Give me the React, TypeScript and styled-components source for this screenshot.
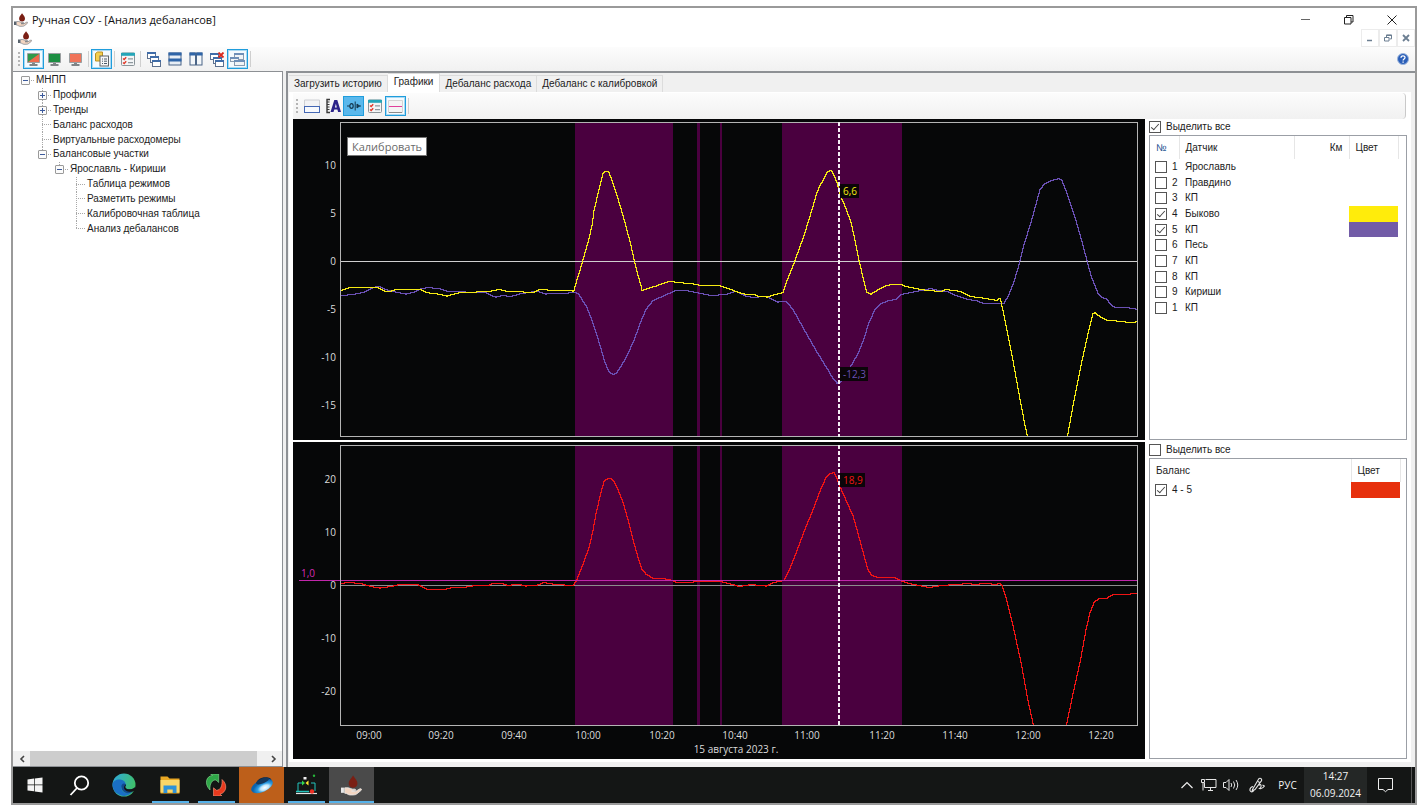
import React, { useLayoutEffect, useRef, useState } from "react";
import styled, { createGlobalStyle } from "styled-components";

/* ---------- theme values ---------- */

const FORM_FONT = `"Liberation Sans", Arial, sans-serif`;
const UI_FONT = `"Open Sans", "Noto Sans", sans-serif`;
const FACE = "#f0f0f0";
const EDGE = "#8d9094";
const ACCENT = "#1f9ddc";

const GlobalStyle = createGlobalStyle`
  *, *::before, *::after { box-sizing: border-box; }
  html, body { margin: 0; padding: 0; background: #fff; }
  body { font: 10px/14px ${FORM_FONT}; color: #1b1b22; }
  button, input { font: inherit; color: inherit; margin: 0; padding: 0; }
  button { border: 0; background: none; cursor: default; }
  svg { display: block; }
`;

/* ---------- window frame ---------- */

const Desktop = styled.div`
  height: 100vh;
  min-height: 480px;
  padding: 6px 6px 6px 11px;
  display: flex;
`;

const Frame = styled.div`
  flex: 1;
  min-width: 0;
  display: flex;
  flex-direction: column;
  border: 2px solid #9a9a9a;
  background: ${FACE};
`;

const TitleBar = styled.header`
  flex: none;
  height: 21px;
  display: flex;
  align-items: center;
  padding: 2px 2px 0 1px;
  background: #fff;
`;

const Title = styled.h1`
  margin: 0 0 0 4px;
  flex: 1;
  font: 400 11px/16px ${UI_FONT};
  color: #111;
`;

const CaptionButton = styled.button`
  width: 43px;
  height: 19px;
  display: flex;
  align-items: center;
  justify-content: center;
`;

const MdiBar = styled.div`
  flex: none;
  height: 18px;
  display: flex;
  align-items: center;
  background: #fff;
  padding-left: 5px;
`;

const MdiButtons = styled.div`
  margin-left: auto;
  display: flex;
  gap: 2px;
  height: 18px;
  padding: 1px;
  background: #ececec;
`;

const MdiButton = styled.button`
  width: 16px;
  display: flex;
  align-items: center;
  justify-content: center;
  background: #fff;
`;

/* ---------- tool strips ---------- */

const ToolStrip = styled.div`
  flex: none;
  height: 24px;
  display: flex;
  align-items: center;
  padding: 0 6px 0 5px;
  background: linear-gradient(#fcfcfc, #f1f1f1);
`;

const ChartStrip = styled(ToolStrip)`
  height: 26px;
  padding: 0 0 0 3px;
  margin-right: 5px;
  border-radius: 0 4px 4px 0;
  border-right: 1px solid #c9c9c9;
`;

const Grip = styled.span`
  flex: none;
  width: 2px;
  height: 14px;
  margin-right: 3px;
  background: repeating-linear-gradient(#b5b5b5 0 2px, transparent 2px 4px);
`;

const ToolButton = styled.button<{ $state?: "checked" | "pressed" }>`
  flex: none;
  width: 21px;
  height: 20px;
  display: flex;
  align-items: center;
  justify-content: center;
  border: 1px solid ${(p) => (p.$state ? ACCENT : "transparent")};
  box-shadow: ${(p) => (p.$state === "checked" ? "inset 0 0 0 1px #a9d9f3" : "none")};
  background: ${(p) => (p.$state === "pressed" ? "#5ab8ec" : p.$state ? "#f4fafe" : "none")};
`;

const Separator = styled.span`
  flex: none;
  width: 1px;
  height: 16px;
  margin: 0 2px;
  background: #cfcfcf;
`;

const HelpButton = styled.button`
  margin-left: auto;
`;

/* ---------- client area ---------- */

const Client = styled.main`
  flex: 1;
  min-height: 0;
  display: flex;
  gap: 3px;
`;

const TreePane = styled.nav`
  flex: none;
  width: 270px;
  display: flex;
  flex-direction: column;
  border: 1px solid ${EDGE};
  border-left: 0;
  background: #fff;
`;

const TreeList = styled.ul`
  list-style: none;
  margin: 0 0 auto;
  padding: 1px 0 0 4px;
  height: 164px;
  display: grid;
  grid-auto-rows: 1fr;
`;

const TreeRow = styled.li<{ $depth: number }>`
  display: flex;
  align-items: stretch;
  padding-left: ${(p) => p.$depth * 17}px;
`;

const Branch = styled.span<{ $line: "none" | "full" | "half" }>`
  flex: none;
  width: 17px;
  display: grid;
  place-items: center;
  background:
    ${(p) =>
      p.$line === "none"
        ? ""
        : `repeating-linear-gradient(#a8a8a8 0 1px, transparent 1px 2px) 8px 0 / 1px ${p.$line === "full" ? "100%" : "50%"} no-repeat,`}
    repeating-linear-gradient(90deg, #a8a8a8 0 1px, transparent 1px 2px) 8px 50% / 9px 1px no-repeat;
`;

const Expander = styled.button`
  width: 9px;
  height: 9px;
  border: 1px solid #9a9a9a;
  border-radius: 1px;
  background:
    linear-gradient(#3c5a9c, #3c5a9c) center / 5px 1px no-repeat,
    #fbfbfb;
  &[aria-expanded="false"] {
    background:
      linear-gradient(#3c5a9c, #3c5a9c) center / 5px 1px no-repeat,
      linear-gradient(#3c5a9c, #3c5a9c) center / 1px 5px no-repeat,
      #fbfbfb;
  }
`;

const TreeLabel = styled.a`
  align-self: center;
  padding-left: 2px;
  color: inherit;
  text-decoration: none;
  white-space: nowrap;
`;

const ScrollBar = styled.div`
  flex: none;
  height: 15px;
  display: flex;
  background: ${FACE};
`;

const ScrollArrow = styled.button`
  flex: none;
  width: 17px;
  display: grid;
  place-items: center;
`;

const ScrollThumb = styled.div`
  flex: 1;
  margin-right: 8px;
  background: #cdcdcd;
`;

const DocPane = styled.section`
  flex: 1;
  min-width: 0;
  display: flex;
  flex-direction: column;
  border-top: 2px solid ${EDGE};
  border-left: 2px solid ${EDGE};
  padding: 0 4px 5px 1px;
`;

const Tabs = styled.div`
  flex: none;
  height: 19px;
  display: flex;
  align-items: flex-end;
`;

const Tab = styled.button`
  height: 17px;
  padding: 0 5px;
  border: 1px solid #dcdcdc;
  border-width: 1px 1px 0 0;
  white-space: nowrap;
  &[aria-selected="true"] {
    height: 19px;
    padding: 0 6px 3px;
    background: #fff;
  }
`;

const TabPage = styled.div`
  flex: 1;
  min-height: 0;
  display: flex;
  flex-direction: column;
  padding: 1px 0 3px 4px;
  background: #fff;
`;

const Workspace = styled.div`
  flex: 1;
  min-height: 0;
  display: grid;
  grid-template-columns: minmax(0, 1fr) 258px;
  grid-template-rows: minmax(0, 321fr) minmax(0, 317fr);
  gap: 2px 4px;
  padding-right: 4px;
`;

/* ---------- charts ---------- */

const ChartBox = styled.div`
  position: relative;
  min-width: 0;
  min-height: 0;
  overflow: hidden;
  background: #060708;
`;

const ChartSvg = styled.svg`
  position: absolute;
  inset: 0;
  width: 100%;
  height: 100%;
  font: 10px ${UI_FONT};
`;

const Tooltip = styled.div`
  position: absolute;
  left: 54px;
  top: 18px;
  padding: 0 4px;
  border: 1px solid #767676;
  background: #fff;
  font: 11px/17px ${UI_FONT};
  color: #6a6a6a;
`;

/* ---------- side lists ---------- */

const Side = styled.div`
  min-height: 0;
  display: flex;
  flex-direction: column;
`;

const SelectAll = styled.label`
  flex: none;
  height: 16px;
  display: flex;
  align-items: center;
  gap: 5px;
`;

const Check = styled.input.attrs({ type: "checkbox" })`
  appearance: none;
  flex: none;
  width: 12px;
  height: 12px;
  border: 1px solid #555;
  background: #fff;
  display: grid;
  place-items: center;
  &:checked::before {
    content: "";
    width: 8px;
    height: 4px;
    border: solid #444;
    border-width: 0 0 1px 1px;
    transform: translateY(-1px) rotate(-48deg);
  }
`;

const ListBox = styled.div`
  flex: 1;
  min-height: 0;
  overflow: hidden;
  border: 1px solid #9b9fa6;
  background: #fff;
`;

const ListTable = styled.table<{ $height: number }>`
  width: 100%;
  height: ${(p) => p.$height}px;
  table-layout: fixed;
  border-collapse: collapse;
  th, td { padding: 0; text-align: left; font-weight: 400; white-space: nowrap; }
  th { height: 23px; padding: 0 6px; border-right: 1px solid #e6e6e6; }
  th:last-child { border-right: 0; }
`;

const HeadNumber = styled.th`
  color: #1c4f8f;
`;

const HeadRight = styled.th`
  && { text-align: right; }
`;

const NameCell = styled.td`
  && { padding-left: 6px; }
`;

const Swatch = styled.td<{ $color?: string }>`
  background: ${(p) => p.$color ?? "transparent"};
`;

const RowLabel = styled.label`
  display: flex;
  align-items: center;
  gap: 5px;
  padding-left: 5px;
`;

/* ---------- taskbar ---------- */

const Taskbar = styled.footer`
  flex: none;
  height: 36px;
  display: flex;
  background: #141615;
  color: #f2f2f2;
  font: 10px/17px ${UI_FONT};
`;

const TaskButton = styled.button<{ $width: number; $bg?: string; $running?: boolean; $active?: boolean }>`
  flex: none;
  width: ${(p) => p.$width}px;
  display: grid;
  place-items: center;
  background:
    linear-gradient(#56b2ea, #56b2ea) bottom / ${(p) => (p.$active ? "100%" : p.$running ? "37px" : "0")} 2px no-repeat,
    ${(p) => p.$bg ?? "transparent"};
`;

const Tray = styled.div`
  margin-left: auto;
  display: flex;
  align-items: center;
`;

const TrayButton = styled.button<{ $width: number }>`
  width: ${(p) => p.$width}px;
  height: 36px;
  display: grid;
  place-items: center;
`;

const Clock = styled.time`
  width: 63px;
  height: 36px;
  padding-top: 1px;
  background: #242726;
  text-align: center;
`;

const ShowDesktop = styled.button`
  width: 4px;
  height: 36px;
  margin-left: 7px;
  border-left: 1px solid #555;
`;

/* ---------- icons ---------- */

const DropHand = ({ size = 14, cuff = "#56616b", drop = "#7a1f14" }: { size?: number; cuff?: string; drop?: string }) => (
  <svg width={size} height={size} viewBox="0 0 20 20">
    <path d="M11.5 0.5c1.6 2.7 4.2 4.7 4.2 7.4a4.2 4.2 0 0 1-8.4 0c0-2.700 2.600-4.700 4.200-7.400z" fill={drop} />
    <path d="M0 12h2.800v5H0z" fill={cuff} />
    <path
      d="M3.500 12.200h3.200c1.800 0 2.600 1.300 4.400 1.300h2c1.200 0 1.200 1.500 0 1.600l-3 .2 4 .2 3.600-2.200c1.400-.8 2.500.4 1.500 1.300l-4 3.300c-1 .8-2 1.100-3.400 1.100H8.500c-1.800 0-2.500-1.700-5-1.700z"
      fill="#f3d6c2"
      stroke={cuff}
      strokeWidth="0.8"
    />
  </svg>
);

const MonitorIcon = ({ a, b }: { a: string; b: string }) => (
  <svg width="15" height="15" viewBox="0 0 15 15">
    <rect x="1" y="1" width="13" height="10" rx="0.800" fill="#9a9ea0" />
    <path d="M2 2h11v8H2z" fill={b} />
    <path d="M2 2h11L2 10z" fill={a} />
    <path d="M6 11h3v1h2.500v2h-8v-2H6z" fill="#7f8486" />
  </svg>
);

const CopyListIcon = () => (
  <svg width="16" height="16" viewBox="0 0 16 16">
    <path d="M1.500 2.500l2-1.500h5v9h-7z" fill="#f4cf4e" stroke="#b98f22" />
    <rect x="6" y="5" width="8.500" height="10" fill="#f7f7f7" stroke="#5e6468" />
    <path d="M8 8h1M8 10.200h1M8 12.500h1M10 8h3M10 10.200h3M10 12.500h3" stroke="#4a5a6a" />
  </svg>
);

const ChecklistIcon = () => (
  <svg width="14" height="14" viewBox="0 0 14 14">
    <rect x="0.500" y="1" width="13" height="12.500" rx="1" fill="#f3f5f6" stroke="#8b9499" />
    <path d="M0 0.800h14v3H0z" fill="#25a5b8" />
    <path d="M2 6.500l1.200 1 2-2.200M2 10.500l1.200 1 2-2.200" stroke="#e23a2a" strokeWidth="1.400" fill="none" />
    <path d="M7 6.800h5M7 10.700h5" stroke="#8f999f" strokeWidth="1.200" />
  </svg>
);

const MiniWindow = ({ x, y, w = 8, h = 6, pale = false }: { x: number; y: number; w?: number; h?: number; pale?: boolean }) => (
  <g>
    <rect x={x + 0.5} y={y + 0.5} width={w} height={h} fill={pale ? "#f1f4f7" : "#fff"} stroke={pale ? "#8a9bb0" : "#5d7190"} />
    <rect x={x} y={y} width={w + 1} height="2" fill={pale ? "#6e8fb8" : "#3f6ca8"} />
  </g>
);

const CascadeIcon = () => (
  <svg width="16" height="15" viewBox="0 0 16 15">
    <MiniWindow x={1} y={0} />
    <MiniWindow x={4} y={4} />
    <MiniWindow x={6} y={8} />
  </svg>
);

const TileRowsIcon = () => (
  <svg width="14" height="14" viewBox="0 0 14 14">
    <rect x="1" y="1" width="12" height="12" fill="#e8eef5" stroke="#4b6587" />
    <path d="M0.500 0.500h13v3H0.500zM0.500 6.500h13v3H0.500z" fill="#2f65a8" />
  </svg>
);

const TileColsIcon = () => (
  <svg width="14" height="14" viewBox="0 0 14 14">
    <rect x="1" y="1" width="5.500" height="12" fill="#f4f7fa" stroke="#4b6587" />
    <rect x="7.500" y="1" width="5.500" height="12" fill="#f4f7fa" stroke="#4b6587" />
    <path d="M0.500 0.500h6v3h-6zM7.500 0.500h6v3h-6z" fill="#2f65a8" />
  </svg>
);

const CloseAllIcon = () => (
  <svg width="16" height="15" viewBox="0 0 16 15">
    <MiniWindow x={1} y={1} />
    <MiniWindow x={4} y={5} />
    <MiniWindow x={6} y={8} />
    <path d="M9.500 0.500l5 5M14.500 0.500l-5 5" stroke="#d9281c" strokeWidth="1.800" />
  </svg>
);

const WindowsPaleIcon = () => (
  <svg width="17" height="15" viewBox="0 0 17 15">
    <MiniWindow x={5} y={1} w={9} h={6} pale />
    <MiniWindow x={1} y={5} w={8} h={4} pale />
    <MiniWindow x={5} y={8} w={10} h={5} pale />
  </svg>
);

const HelpIcon = () => (
  <svg width="12" height="12" viewBox="0 0 12 12">
    <circle cx="6" cy="6" r="5.500" fill="#2b5fb8" stroke="#9ab4dc" />
    <path d="M4 4.700c0-2.500 4-2.400 4-.2 0 1.500-1.900 1.400-1.900 3M6.100 8.500v1.200" stroke="#fff" strokeWidth="1.300" fill="none" />
  </svg>
);

const SplitIcon = () => (
  <svg width="16" height="16" viewBox="0 0 16 16">
    <path d="M0.500 8V2h15v6" fill="#f3f3f5" stroke="#cfd0d4" />
    <rect x="0.500" y="8.500" width="15" height="6" fill="#f7f9fd" stroke="#4467b4" />
  </svg>
);

const AxisIcon = () => (
  <svg width="16" height="16" viewBox="0 0 16 16">
    <path d="M5 1.500H2v13h3" fill="none" stroke="#3a3a3a" strokeWidth="1.400" />
    <path d="M2 4h2.500M2 6.500h2.500M2 9h2.500M2 11.500h2.500" stroke="#3a3a3a" strokeWidth="1.200" />
    <path d="M5.500 14L9.300 2h3L16 14h-2.900l-.7-2.500H9.300L8.500 14zM9.900 9.400h1.900L10.900 5.800z" fill="#2b2389" fillRule="evenodd" />
  </svg>
);

const CalibrateIcon = () => (
  <svg width="14" height="12" viewBox="0 0 14 12">
    <ellipse cx="4.500" cy="6" rx="1.700" ry="2.300" fill="none" stroke="#15384f" strokeWidth="1.200" />
    <path d="M0 6h2.500M8.200 1.500v9M10 4l2.500 2-2.500 2zM12 6h2" stroke="#15384f" fill="#15384f" />
  </svg>
);

const ThresholdIcon = () => (
  <svg width="15" height="15" viewBox="0 0 15 15">
    <path d="M0.500 1.500h14v12H0.500z" fill="#f4f4f4" stroke="#d4d4d4" />
    <path d="M1 13.500h13" stroke="#8a8a8a" />
    <path d="M1 7.500h13" stroke="#e0409c" />
  </svg>
);

const StartIcon = () => (
  <svg width="16" height="16" viewBox="0 0 16 16" fill="#f4f4f4">
    <path d="M0.500 2.500L7 1.600v6H.5zM7.700 1.500L15.500.4v7.200H7.700zM.5 8.300H7v6L.5 13.400zM7.700 8.300h7.800v7.300l-7.800-1.100z" />
  </svg>
);

const SearchIcon = () => (
  <svg width="21" height="21" viewBox="0 0 21 21" fill="none" stroke="#fff" strokeWidth="1.800">
    <circle cx="12.500" cy="8" r="6.700" />
    <path d="M8 13L1.500 20" />
  </svg>
);

const EdgeIcon = () => (
  <svg width="24" height="24" viewBox="0 0 24 24">
    <defs>
      <linearGradient id="edgeTop" x1="0" y1="0" x2="1" y2="0.400">
        <stop offset="0" stopColor="#2fa8e0" />
        <stop offset="1" stopColor="#3fc06a" />
      </linearGradient>
    </defs>
    <circle cx="12" cy="12" r="11.500" fill="url(#edgeTop)" />
    <path d="M.5 12C.8 7.500 5 6 8.500 6.500c4 .5 5.500 3.500 5 5.500-1.500-1-4 0-4 3 0 4 5 6.500 10.500 4.500A11.500 11.500 0 0 1 .5 12z" fill="#1a6fc4" />
    <path d="M9.500 15c-1-4 2.500-5.500 4.500-3.500 0 1.500-1.300 2-.5 3.200 1.500 2.300 7.500 2.300 9.700-.7-.6 2.500-2 4.300-3.700 5.500-5 1.800-9 0-10-4.500z" fill="#11488f" />
    <path d="M14 11.500c0 1.500-1.300 2-.5 3.200 1.500 2.300 7 2.300 9.900-.9l.6 4-3.500.7c-3.500 1-8-.5-8.500-3.500-.2-1.500.7-3 2-3.500z" fill="#141615" />
  </svg>
);

const FolderIcon = () => (
  <svg width="20" height="18" viewBox="0 0 20 18">
    <path d="M0.500 0.500h7l2 2h10v15H.5z" fill="#e9a824" />
    <path d="M.5 4h19v12.500H.5z" fill="#fcd667" />
    <path d="M3.500 9.500h13V17h-3.800v-3.500H7.300V17H3.500z" fill="#2f92d8" />
  </svg>
);

const SyncIcon = () => (
  <svg width="22" height="22" viewBox="0 0 22 22">
    <path d="M5 16C-1 10 1 2 7.500 1.500L5.500 0h8.200v8.500L11 6C7 5.500 4.500 10 5 16z" fill="#2fa848" stroke="#8ad694" strokeWidth="0.600" />
    <path d="M17 5.500c6 5 4.500 13-2 14.700l2 1.800H8.500v-8.200l3 2.500c4.500-.3 6-5 5.500-10.800z" fill="#e8391d" stroke="#f79a80" strokeWidth="0.600" />
  </svg>
);

const SaucerIcon = () => (
  <svg width="24" height="18" viewBox="0 0 24 18">
    <defs>
      <radialGradient id="saucer" cx="0.580" cy="0.720" r="0.550">
        <stop offset="0" stopColor="#fff" />
        <stop offset="0.350" stopColor="#bfe6fb" />
        <stop offset="0.600" stopColor="#2f9fe4" />
        <stop offset="1" stopColor="#0b63ae" />
      </radialGradient>
    </defs>
    <path d="M6 8C7 3 12 .5 18 1.500c3 .5 4 2 3 4z" fill="#122a44" />
    <ellipse cx="12" cy="10" rx="11.500" ry="6" transform="rotate(-24 12 10)" fill="url(#saucer)" />
    <ellipse cx="12.500" cy="5" rx="7" ry="2.400" transform="rotate(-22 12.500 5)" fill="#16385c" />
  </svg>
);

const StationIcon = () => (
  <svg width="24" height="22" viewBox="0 0 24 22" fill="none">
    <path d="M3 17V9h4M16 9h4v8" stroke="#23c4bd" />
    <path d="M1 19.500h21" stroke="#e6e6e6" strokeWidth="1.200" />
    <path d="M1 17.500h13" stroke="#23c4bd" strokeWidth="1.500" />
    <path d="M7 6.500v5l3-2.500z" fill="#36d94a" />
    <path d="M13.500 6.500v5l-3-2.500z" fill="#ffe82e" />
    <path d="M8.500 3h3v2.500h-3z" fill="#f1f1f1" />
    <circle cx="19" cy="1.800" r="1.200" fill="#26b53a" />
    <circle cx="17" cy="17.500" r="2.200" fill="#ef3125" />
  </svg>
);

/* ---------- chart ---------- */

type Point = [number, number];
interface Series { color: string; points: Point[] }
interface Mark { y: number; text: string }
interface ChartProps {
  label: string;
  /* plot area in grid units; series, bands and ticks use the same grid */
  gridHeight: number;
  bottom: number;
  zero: number;
  zeroColor: string;
  ticks: Mark[];
  series: Series[];
  readouts: (Mark & { color: string; width: number })[];
  threshold?: Mark;
  showTime?: boolean;
  children?: React.ReactNode;
}

const GRID_WIDTH = 798;
const CURSOR = 499;
const BANDS: Point[] = [[235, 98], [357, 3], [380, 2], [442, 120]];
const TIMES: [number, string][] = [
  [29, "09:00"], [101, "09:20"], [174, "09:40"], [248, "10:00"], [322, "10:20"], [395, "10:40"],
  [467, "11:00"], [542, "11:20"], [615, "11:40"], [688, "12:00"], [761, "12:20"],
];

const LEFT = 47;
const TOP = 3;
const RIGHT = 7;

/* one horizontal and one vertical run per screen column, as a non-smoothed plotter draws */
function stepPath(points: Point[], width: number, toX: (x: number) => number, toY: (y: number) => number) {
  let d = "";
  let k = 0;
  for (let px = 0; px <= width; px += 1) {
    const gx = (px * GRID_WIDTH) / width;
    while (k < points.length - 2 && points[k + 1][0] < gx) k += 1;
    const [x0, y0] = points[k];
    const [x1, y1] = points[k + 1];
    const t = Math.min(1, (gx - x0) / (x1 - x0));
    const y = Math.round(toY(y0 + (y1 - y0) * t)) + 0.5;
    const x = toX(px) + 0.5;
    d += d ? `H${x}V${y}` : `M${x} ${y}`;
  }
  return d;
}

function Chart(props: ChartProps) {
  const box = useRef<HTMLDivElement>(null);
  const [size, setSize] = useState({ w: 852, h: 320 });

  useLayoutEffect(() => {
    const el = box.current;
    if (!el) return;
    const measure = () => setSize({ w: el.clientWidth, h: el.clientHeight });
    measure();
    const observer = new ResizeObserver(measure);
    observer.observe(el);
    return () => observer.disconnect();
  }, []);

  const plotW = Math.max(size.w - LEFT - RIGHT, 1);
  const plotH = Math.max(size.h - TOP - props.bottom, 1);
  const sx = (x: number) => Math.round(LEFT + (x * plotW) / GRID_WIDTH);
  const sy = (y: number) => TOP + (y * plotH) / props.gridHeight;
  const ly = (y: number) => Math.round(sy(y)) + 0.5;
  const clipId = `plot-${props.gridHeight}`;

  return (
    <ChartBox ref={box}>
      <ChartSvg role="img" aria-label={props.label}>
        <clipPath id={clipId}>
          <rect x={LEFT} y={TOP} width={plotW} height={plotH} />
        </clipPath>
        {BANDS.map(([x, w]) => (
          <rect key={x} x={sx(x)} y={TOP} width={sx(x + w) - sx(x)} height={plotH} fill="#4a003f" />
        ))}
        <path d={`M${LEFT} ${ly(props.zero)}H${LEFT + plotW}`} stroke={props.zeroColor} shapeRendering="crispEdges" />
        <g clipPath={`url(#${clipId})`} fill="none" shapeRendering="crispEdges">
          {props.series.map((s) => (
            <path key={s.color} stroke={s.color} d={stepPath(s.points, plotW, (px) => LEFT + px, sy)} />
          ))}
        </g>
        {props.threshold && (
          <g>
            <path d={`M6 ${ly(props.threshold.y)}H${LEFT + plotW}`} stroke="#c026aa" shapeRendering="crispEdges" />
            <text x="8" y={sy(props.threshold.y) - 3} fill="#d42bb5">{props.threshold.text}</text>
          </g>
        )}
        <rect x={LEFT + 0.5} y={TOP + 0.5} width={plotW - 1} height={Math.max(plotH - 1, 0)} fill="none" stroke="#b4b4b4" />
        <path d={`M${sx(CURSOR)} ${TOP}V${TOP + plotH}`} stroke="#f4eef4" strokeWidth="2" strokeDasharray="4 2" />
        {props.readouts.map((r) => (
          <g key={r.text}>
            <rect x={sx(CURSOR) + 1} y={sy(r.y) - 7} width={r.width} height="14" fill="#0b0509" />
            <text x={sx(CURSOR) + 4} y={sy(r.y) + 4} fill={r.color}>{r.text}</text>
          </g>
        ))}
        <g fill="#dcdcdc" textAnchor="end">
          {props.ticks.map((t) => (
            <text key={t.text} x={LEFT - 4} y={sy(t.y) + 4}>{t.text}</text>
          ))}
        </g>
        {props.showTime && (
          <g fill="#dcdcdc" textAnchor="middle">
            {TIMES.map(([x, t]) => (
              <text key={t} x={sx(x)} y={TOP + plotH + 13}>{t}</text>
            ))}
            <text x={sx(396)} y={TOP + plotH + 27}>15 августа 2023 г.</text>
          </g>
        )}
      </ChartSvg>
      {props.children}
    </ChartBox>
  );
}

/* ---------- data ---------- */

const shift = (dx: number, dy: number, pts: Point[]): Point[] => pts.map(([x, y]) => [x - dx, y - dy]);

const yellow = shift(340, 122, [
  [340, 290], [347, 287.5], [355, 286.5], [377, 287], [385, 291], [390, 290.5], [397, 288.5], [420, 289], [425, 292],
  [437, 293.5], [446, 295.5], [455, 293], [463, 291.5], [475, 291.5], [488, 291], [498, 289], [505, 290.5], [532, 292],
  [540, 288.5], [547, 289.5], [572, 290.5], [573, 289.5], [577, 276], [581, 263], [588, 238], [591, 225], [593, 210],
  [598, 189], [602, 173], [604, 171], [606, 170.5], [608, 172], [611, 180], [615, 192], [620, 208], [625, 226],
  [630, 245], [634, 263], [637, 275], [640, 285], [641, 290], [645, 288.5], [655, 285.5], [665, 282], [670, 280.5],
  [675, 282], [690, 283], [700, 285], [720, 285.5], [730, 289], [738, 292], [745, 294], [752, 293.5], [758, 296],
  [766, 296.5], [774, 294], [782, 292], [786, 280], [794, 260], [803, 235], [812, 206], [815, 195], [818, 187],
  [823, 178], [826, 172], [830, 169.5], [833, 175], [836, 182], [839, 194], [845, 208], [850, 222], [853, 235],
  [858, 260], [864, 285], [866, 292], [870, 293.5], [876, 290], [883, 286], [892, 283.5], [900, 284], [905, 286],
  [915, 288], [927, 290], [940, 291], [945, 289], [960, 291], [970, 296], [985, 298], [996, 300], [999, 297.5],
  [1000, 301], [1003, 315], [1006, 330], [1012, 360], [1017, 388], [1024, 425], [1027, 438], [1046, 560], [1066, 438],
  [1072, 405], [1080, 365], [1087, 333], [1092, 313], [1094, 312], [1100, 317], [1106, 319.5], [1120, 321],
  [1130, 322], [1138, 321],
]);

const violet = shift(340, 122, [
  [340, 295], [352, 294], [362, 292], [370, 288], [378, 285.5], [385, 289], [392, 291], [405, 293.5], [412, 292],
  [420, 288], [428, 287], [440, 288.5], [447, 291], [465, 291.5], [485, 292], [490, 295], [495, 296.5], [502, 295],
  [510, 296], [520, 293], [528, 292], [535, 290.5], [545, 293.5], [560, 293], [575, 292], [578, 294], [586, 307],
  [591, 320], [595, 332], [600, 348], [604, 362], [608, 371], [612, 374], [615, 373], [620, 366], [626, 355],
  [633, 340], [639, 323], [645, 309], [652, 300], [660, 296.5], [668, 293], [676, 289.5], [685, 290], [695, 292],
  [710, 295], [725, 294], [735, 290.5], [745, 296], [755, 297], [763, 295.5], [770, 298], [777, 301.5], [785, 300.5],
  [792, 309], [802, 327], [815, 350], [828, 371], [832, 378], [836, 382.5], [839, 382], [845, 374], [852, 362],
  [858, 351], [863, 338], [868, 322], [874, 309], [880, 303], [888, 300], [895, 299], [900, 294], [915, 291],
  [930, 288], [937, 290], [948, 291.5], [955, 295], [961, 297], [967, 299], [975, 300], [983, 303], [995, 302.5],
  [1003, 302.5], [1007, 296], [1012, 284], [1017, 268], [1023, 244], [1030, 222], [1036, 200], [1039, 189],
  [1043, 184], [1050, 180], [1058, 178], [1061, 180], [1066, 193], [1075, 220], [1082, 245], [1090, 275], [1097, 293],
  [1101, 297], [1105, 298], [1110, 304], [1114, 307], [1125, 307], [1138, 309],
]);

const red = shift(340, 445, [
  [340, 583], [347, 582], [360, 583], [370, 586], [379, 587.5], [390, 586], [400, 583.5], [415, 583.5], [426, 588.5],
  [445, 588.5], [452, 587], [465, 586.5], [475, 585], [488, 585], [492, 582.5], [500, 582.5], [507, 585], [517, 583.5],
  [525, 585.5], [535, 585], [543, 582], [555, 584], [572, 585], [575, 581], [580, 569], [588, 547], [592, 530],
  [595, 513], [600, 492], [603, 481], [606, 478.5], [610, 477.5], [613, 481], [617, 489], [622, 502], [627, 519],
  [632, 539], [637, 557], [641, 569], [645, 573.5], [652, 578], [665, 578.5], [672, 580], [675, 582], [690, 582],
  [698, 580.5], [710, 581], [722, 581.5], [730, 583.5], [738, 586], [750, 584], [765, 585.5], [773, 582], [783, 580],
  [788, 570], [796, 550], [805, 526], [813, 507], [818, 493], [825, 477], [829, 473], [833, 472], [836, 478],
  [839, 486], [846, 502], [852, 515], [857, 533], [863, 555], [867, 569], [871, 575], [877, 577], [893, 576.5],
  [899, 580], [908, 583], [928, 587], [940, 585], [955, 584], [967, 583], [975, 584], [985, 582.5], [993, 584],
  [999, 583], [1001, 585], [1005, 597], [1012, 625], [1020, 662], [1027, 700], [1033, 727], [1049, 850], [1065, 727],
  [1072, 693], [1080, 657], [1085, 629], [1089, 612], [1093, 602], [1098, 598], [1106, 597.5], [1113, 593.5],
  [1125, 594], [1138, 592.5],
]);

const TREE: { text: string; depth: number; line: "none" | "full" | "half"; open?: boolean }[] = [
  { text: "МНПП", depth: 0, line: "none", open: true },
  { text: "Профили", depth: 1, line: "full", open: false },
  { text: "Тренды", depth: 1, line: "full", open: false },
  { text: "Баланс расходов", depth: 1, line: "full" },
  { text: "Виртуальные расходомеры", depth: 1, line: "full" },
  { text: "Балансовые участки", depth: 1, line: "half", open: true },
  { text: "Ярославль - Кириши", depth: 2, line: "half", open: true },
  { text: "Таблица режимов", depth: 3, line: "full" },
  { text: "Разметить режимы", depth: 3, line: "full" },
  { text: "Калибровочная таблица", depth: 3, line: "full" },
  { text: "Анализ дебалансов", depth: 3, line: "half" },
];

const SENSORS: { no: string; name: string; color?: string }[] = [
  { no: "1", name: "Ярославль" },
  { no: "2", name: "Правдино" },
  { no: "3", name: "КП" },
  { no: "4", name: "Быково", color: "#ffec0b" },
  { no: "5", name: "КП", color: "#725ca7" },
  { no: "6", name: "Песь" },
  { no: "7", name: "КП" },
  { no: "8", name: "КП" },
  { no: "9", name: "Кириши" },
  { no: "1", name: "КП" },
];

/* ---------- page ---------- */

export default function App() {
  return (
    <Desktop>
      <GlobalStyle />
      <Frame>
        <TitleBar>
          <DropHand />
          <Title>Ручная СОУ - [Анализ дебалансов]</Title>
          <CaptionButton aria-label="Свернуть">
            <svg width="10" height="10"><path d="M0 4.500h9" stroke="#666" /></svg>
          </CaptionButton>
          <CaptionButton aria-label="Восстановить">
            <svg width="10" height="10" fill="none" stroke="#222"><path d="M.5 2.500h6.500v6.500H.5zM2.500 2.500v-2h6.500v6.500h-2" /></svg>
          </CaptionButton>
          <CaptionButton aria-label="Закрыть">
            <svg width="10" height="10" stroke="#222"><path d="M.5.5l9 9M9.500.5l-9 9" /></svg>
          </CaptionButton>
        </TitleBar>

        <MdiBar>
          <DropHand />
          <MdiButtons>
            <MdiButton aria-label="Свернуть документ">
              <svg width="8" height="8"><path d="M1 6.500h5" stroke="#6c7f92" strokeWidth="1.500" /></svg>
            </MdiButton>
            <MdiButton aria-label="Восстановить документ">
              <svg width="8" height="8" fill="none" stroke="#6c7f92"><path d="M.5 3.500h4.500v3.500H.5zM2.500 3V.9h5v4H5.500M2.500 1.500h5" /></svg>
            </MdiButton>
            <MdiButton aria-label="Закрыть документ">
              <svg width="8" height="8" stroke="#6c7f92" strokeWidth="1.800"><path d="M1 1l6 6M7 1L1 7" /></svg>
            </MdiButton>
          </MdiButtons>
        </MdiBar>

        <ToolStrip role="toolbar">
          <Grip />
          <ToolButton $state="checked" aria-label="Все датчики"><MonitorIcon a="#2f9a4b" b="#ee6a4d" /></ToolButton>
          <ToolButton aria-label="Исправные датчики"><MonitorIcon a="#1d8f43" b="#1d8f43" /></ToolButton>
          <ToolButton aria-label="Неисправные датчики"><MonitorIcon a="#f0745a" b="#f0745a" /></ToolButton>
          <Separator />
          <ToolButton $state="checked" aria-label="Дерево объектов"><CopyListIcon /></ToolButton>
          <Separator />
          <ToolButton aria-label="Список"><ChecklistIcon /></ToolButton>
          <Separator />
          <ToolButton aria-label="Каскадом"><CascadeIcon /></ToolButton>
          <ToolButton aria-label="Сверху вниз"><TileRowsIcon /></ToolButton>
          <ToolButton aria-label="Слева направо"><TileColsIcon /></ToolButton>
          <ToolButton aria-label="Закрыть все окна"><CloseAllIcon /></ToolButton>
          <ToolButton $state="checked" aria-label="Окна"><WindowsPaleIcon /></ToolButton>
          <Separator />
          <HelpButton aria-label="Справка"><HelpIcon /></HelpButton>
        </ToolStrip>

        <Client>
          <TreePane>
            <TreeList>
              {TREE.map((n) => (
                <TreeRow key={n.text} $depth={n.depth}>
                  <Branch $line={n.line}>
                    {n.open !== undefined && <Expander aria-label={n.text} aria-expanded={n.open} />}
                  </Branch>
                  <TreeLabel href="#">{n.text}</TreeLabel>
                </TreeRow>
              ))}
            </TreeList>
            <ScrollBar>
              <ScrollArrow aria-label="Влево">
                <svg width="6" height="8" fill="none" stroke="#444" strokeWidth="1.600"><path d="M5 1L2 4l3 3" /></svg>
              </ScrollArrow>
              <ScrollThumb />
              <ScrollArrow aria-label="Вправо">
                <svg width="6" height="8" fill="none" stroke="#444" strokeWidth="1.600"><path d="M1 1l3 3-3 3" /></svg>
              </ScrollArrow>
            </ScrollBar>
          </TreePane>

          <DocPane>
            <Tabs role="tablist">
              <Tab role="tab" aria-selected={false}>Загрузить историю</Tab>
              <Tab role="tab" aria-selected={true}>Графики</Tab>
              <Tab role="tab" aria-selected={false}>Дебаланс расхода</Tab>
              <Tab role="tab" aria-selected={false}>Дебаланс с калибровкой</Tab>
            </Tabs>
            <TabPage>
              <ChartStrip role="toolbar">
                <Grip />
                <ToolButton aria-label="Разделить"><SplitIcon /></ToolButton>
                <ToolButton aria-label="Масштаб оси"><AxisIcon /></ToolButton>
                <ToolButton $state="pressed" aria-label="Калибровать"><CalibrateIcon /></ToolButton>
                <ToolButton aria-label="Список кривых"><ChecklistIcon /></ToolButton>
                <ToolButton $state="checked" aria-label="Порог"><ThresholdIcon /></ToolButton>
                <Separator />
              </ChartStrip>
              <Workspace>
                <Chart
                  label="Дебаланс по датчикам"
                  gridHeight={315}
                  bottom={3}
                  zero={139}
                  zeroColor="#cfcfcf"
                  ticks={[
                    { y: 43, text: "10" }, { y: 91, text: "5" }, { y: 139, text: "0" },
                    { y: 187, text: "-5" }, { y: 235, text: "-10" }, { y: 283, text: "-15" },
                  ]}
                  series={[{ color: "#6a50b4", points: violet }, { color: "#f5ea12", points: yellow }]}
                  readouts={[
                    { y: 69, text: "6,6", color: "#f5ea12", width: 19 },
                    { y: 252, text: "-12,3", color: "#6a50b4", width: 28 },
                  ]}
                >
                  <Tooltip role="tooltip">Калибровать</Tooltip>
                </Chart>

                <Side>
                  <SelectAll><Check defaultChecked />Выделить все</SelectAll>
                  <ListBox>
                    <ListTable $height={180}>
                      <colgroup>
                        <col width="29" /><col width="115" /><col width="55" /><col width="49" /><col />
                      </colgroup>
                      <thead>
                        <tr><HeadNumber>№</HeadNumber><th>Датчик</th><HeadRight>Км</HeadRight><th>Цвет</th><th /></tr>
                      </thead>
                      <tbody>
                        {SENSORS.map((s, i) => (
                          <tr key={i}>
                            <td><RowLabel><Check defaultChecked={!!s.color} />{s.no}</RowLabel></td>
                            <NameCell>{s.name}</NameCell>
                            <td />
                            <Swatch $color={s.color} />
                            <td />
                          </tr>
                        ))}
                      </tbody>
                    </ListTable>
                  </ListBox>
                </Side>

                <Chart
                  label="Баланс участка"
                  gridHeight={281}
                  bottom={33}
                  zero={140}
                  zeroColor="#8c8c8c"
                  ticks={[
                    { y: 34, text: "20" }, { y: 87, text: "10" }, { y: 140, text: "0" },
                    { y: 193, text: "-10" }, { y: 246, text: "-20" },
                  ]}
                  series={[{ color: "#f01414", points: red }]}
                  readouts={[{ y: 35, text: "18,9", color: "#f01414", width: 25 }]}
                  threshold={{ y: 135, text: "1,0" }}
                  showTime
                />

                <Side>
                  <SelectAll><Check />Выделить все</SelectAll>
                  <ListBox>
                    <ListTable $height={39}>
                      <colgroup>
                        <col /><col width="49" /><col width="6" />
                      </colgroup>
                      <thead>
                        <tr><th>Баланс</th><th>Цвет</th><th /></tr>
                      </thead>
                      <tbody>
                        <tr>
                          <td><RowLabel><Check defaultChecked />4 - 5</RowLabel></td>
                          <Swatch $color="#e7300c" />
                          <td />
                        </tr>
                      </tbody>
                    </ListTable>
                  </ListBox>
                </Side>
              </Workspace>
            </TabPage>
          </DocPane>
        </Client>

        <Taskbar>
          <TaskButton $width={44} aria-label="Пуск"><StartIcon /></TaskButton>
          <TaskButton $width={44} aria-label="Поиск"><SearchIcon /></TaskButton>
          <TaskButton $width={46} aria-label="Браузер"><EdgeIcon /></TaskButton>
          <TaskButton $width={46} $running aria-label="Проводник"><FolderIcon /></TaskButton>
          <TaskButton $width={46} $running aria-label="Синхронизация"><SyncIcon /></TaskButton>
          <TaskButton $width={45} $bg="#bd5f1a" aria-label="Диск"><SaucerIcon /></TaskButton>
          <TaskButton $width={45} $running aria-label="Станция"><StationIcon /></TaskButton>
          <TaskButton $width={45} $bg="#4a4a4a" $active aria-label="Ручная СОУ">
            <DropHand size={21} cuff="#e8e8e8" />
          </TaskButton>
          <Tray>
            <TrayButton $width={22} aria-label="Скрытые значки">
              <svg width="12" height="8" fill="none" stroke="#eee" strokeWidth="1.200"><path d="M.5 7L6 1.500 11.500 7" /></svg>
            </TrayButton>
            <TrayButton $width={22} aria-label="Сеть">
              <svg width="16" height="14" fill="none" stroke="#e6e6e6"><path d="M4.500 1.500h10.500v8H3.500V5M7 12.500h5M9.500 10v2.500M.5 1.500h3v3h-3zM2 4.500v8" /></svg>
            </TrayButton>
            <TrayButton $width={22} aria-label="Громкость">
              <svg width="16" height="14" fill="none" stroke="#e6e6e6"><path d="M.5 4.500h2.500l3-3v11l-3-3H.5zM8 5q1.500 2 0 4M10.500 3.500q2.500 3.500 0 7M13 2q3.500 5 0 10" /></svg>
            </TrayButton>
            <TrayButton $width={29} aria-label="Перо">
              <svg width="16" height="16" viewBox="0 0 16 16" fill="none" stroke="#e6e6e6" strokeWidth="1.100">
                <path d="M3.500 12.500L9.500 2.200q1.500-2 3 0 .5 1-.5 2.200L6 12.500l-2.800 1.300zM9 4.500l2.500 1.500M4 9.500q-3.500 1-3 4 1.500 3 4 0M10 8.500q1.500-2 2 0t-1.500 3q2.500 1 5-2.500l-2-1" />
              </svg>
            </TrayButton>
            <TrayButton $width={33}>РУС</TrayButton>
            <Clock dateTime="2024-09-06T14:27">14:27<br />06.09.2024</Clock>
            <TrayButton $width={37} aria-label="Уведомления">
              <svg width="16" height="16" fill="none" stroke="#eee"><path d="M.5 1.500h14v11H10l-2.500 2.200L5 12.500H.5z" /></svg>
            </TrayButton>
            <ShowDesktop aria-label="Рабочий стол" />
          </Tray>
        </Taskbar>
      </Frame>
    </Desktop>
  );
}
